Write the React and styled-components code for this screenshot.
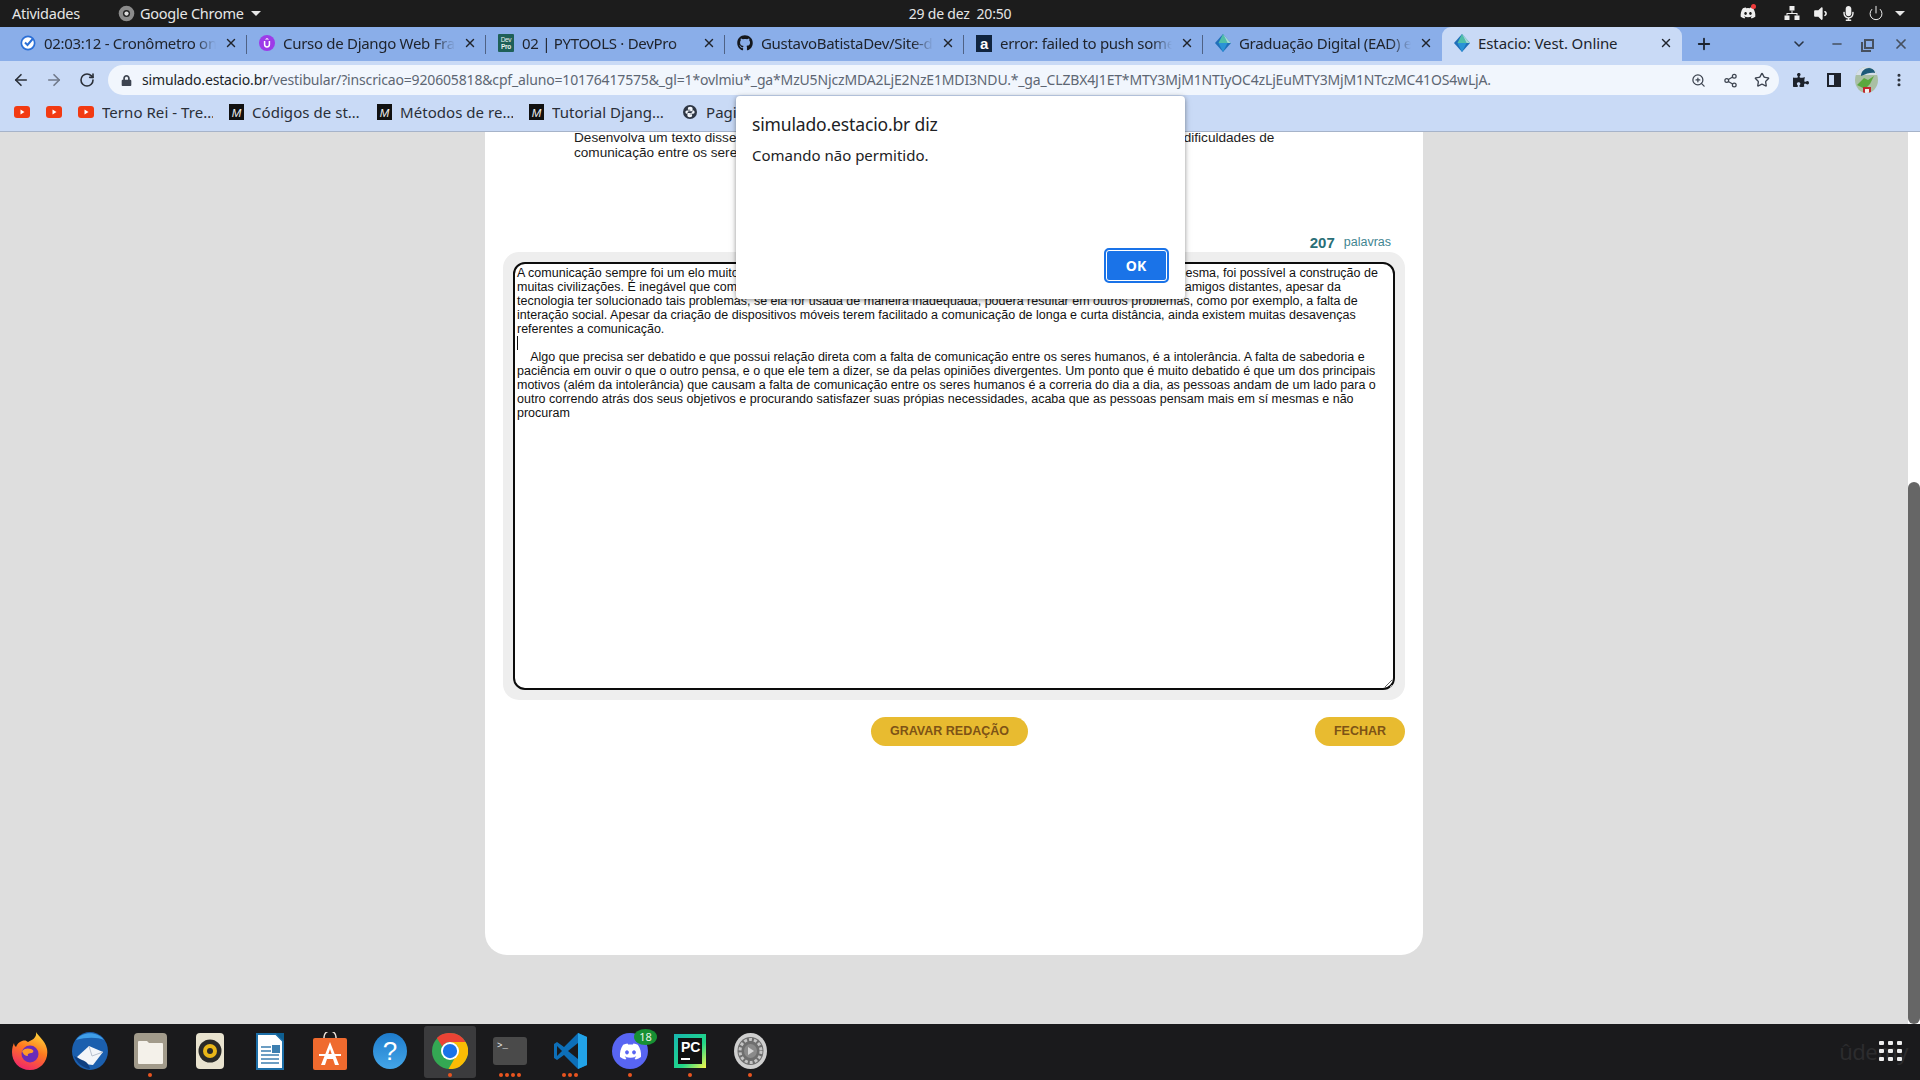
import React from 'react';
import styled, { createGlobalStyle } from 'styled-components';
import { FaDiscord, FaGithub, FaMicrophone, FaVolumeDown, FaPuzzlePiece, FaLock } from 'react-icons/fa';
import { ArrowLeft, ArrowRight, RotateCw, X, Plus, ChevronDown, Minus, ZoomIn, Share2, Star, EllipsisVertical, Power } from 'lucide-react';

const ui = '"Noto Sans", "Open Sans", sans-serif';
const arial = '"Liberation Sans", Arial, sans-serif';

const Global = createGlobalStyle`
  html, body { margin: 0; padding: 0; height: 100%; overflow: hidden; background: #dedede; }
  * { box-sizing: border-box; }
`;

const Screen = styled.div`
  position: relative;
  width: 1920px;
  height: 1080px;
  display: flex;
  flex-direction: column;
  overflow: hidden;
  font-family: ${ui};
`;

/* ubuntu top bar */
const TopBar = styled.div`
  height: 27px;
  flex: none;
  padding-bottom: 1px;
  background: #1c1c1c;
  color: #e6e6e6;
  display: grid;
  grid-template-columns: 1fr auto 1fr;
  align-items: center;
  font-size: 14.5px;
  letter-spacing: -0.25px;
`;
const TopLeft = styled.div`
  display: flex;
  align-items: center;
  padding-left: 12px;
`;
const AppName = styled.div`
  display: flex;
  align-items: center;
  gap: 5px;
  margin-left: 38px;
`;
const Clock = styled.div`
  white-space: pre;
  font-size: 14px;
  letter-spacing: -0.2px;
`;
const TopRight = styled.div`
  display: flex;
  align-items: center;
  justify-content: flex-end;
  padding-right: 10px;
`;
const StatusSlot = styled.div`
  position: relative;
  width: ${p => p.$w || 28}px;
  margin-right: ${p => p.$mr || 0}px;
  display: flex;
  justify-content: center;
  align-items: center;
  color: #eee;
`;
const RedDot = styled.span`
  position: absolute;
  top: -1px;
  right: 6px;
  width: 5px;
  height: 5px;
  border-radius: 50%;
  background: #ef3b3b;
`;
const DownCaret = styled.span`
  width: 0;
  height: 0;
  border-left: 5px solid transparent;
  border-right: 5px solid transparent;
  border-top: 5px solid #e6e6e6;
  margin-left: ${p => p.$ml || 0}px;
`;

/* chrome tabs */
const TabStrip = styled.div`
  height: 34px;
  flex: none;
  background: #8aaee9;
  display: flex;
  align-items: stretch;
  padding-left: 8px;
`;
const Tab = styled.div`
  position: relative;
  width: ${p => (p.$active ? 240 : 239)}px;
  display: flex;
  align-items: center;
  padding: 0 9px 2px 12px;
  gap: 8px;
  color: #20242c;
  font-size: 15px;
  letter-spacing: ${p => (p.$active ? '-0.1px' : '-0.3px')};
  background: ${p => (p.$active ? '#c9daf6' : 'transparent')};
  border-radius: 9px 9px 0 0;
  &::after {
    content: '';
    display: ${p => (p.$divider ? 'block' : 'none')};
    position: absolute;
    right: 0;
    top: 8px;
    bottom: 7px;
    width: 1px;
    background: #4f6285;
  }
`;
const TabTitle = styled.div`
  flex: 1;
  white-space: nowrap;
  overflow: hidden;
  -webkit-mask-image: ${p => (p.$active ? 'none' : 'linear-gradient(to right, #000 88%, transparent 100%)')};
  mask-image: ${p => (p.$active ? 'none' : 'linear-gradient(to right, #000 88%, transparent 100%)')};
`;
const NewTab = styled.div`
  width: 44px;
  display: flex;
  align-items: center;
  justify-content: center;
  color: #1c2430;
`;
const WindowButtons = styled.div`
  margin-left: auto;
  display: flex;
  align-items: center;
  padding-right: 3px;
  color: #46505f;
`;
const WindowSlot = styled.div`
  width: ${p => p.$w || 32}px;
  margin-right: ${p => p.$mr || 0}px;
  display: flex;
  justify-content: center;
  color: ${p => p.$dark ? '#2a3444' : 'inherit'};
`;
const Restore = styled.span`
  position: relative;
  width: 10px;
  height: 10px;
  border: 2px solid #46505f;
  &::before {
    content: '';
    position: absolute;
    left: -5px;
    top: 1px;
    width: 8px;
    height: 8px;
    border-left: 2px solid #46505f;
    border-bottom: 2px solid #46505f;
  }
`;

/* toolbar + bookmarks */
const ToolRow = styled.div`
  height: 35px;
  flex: none;
  background: #c9daf6;
  display: flex;
  align-items: flex-start;
  padding: 4px 0 0 5px;
  gap: 1px;
  color: #2a2f38;
`;
const ToolButton = styled.div`
  width: ${p => p.$w || 32}px;
  height: 30px;
  flex: none;
  display: flex;
  align-items: center;
  justify-content: center;
  color: ${p => p.$off ? '#70798a' : 'inherit'};
`;
const AddressBar = styled.div`
  width: 1671px;
  height: 30px;
  flex: none;
  margin: 0 5px 0 5px;
  padding: 0 1px 0 13px;
  border-radius: 15px;
  background: #f1f6fd;
  display: flex;
  align-items: center;
`;
const Url = styled.div`
  flex: 1;
  margin-left: 10px;
  padding-bottom: 2px;
  font-size: 14px;
  letter-spacing: -0.16px;
  white-space: nowrap;
  overflow: hidden;
  color: #5d6673;
`;
const Domain = styled.span`
  color: #1b1f27;
`;
const AddressIcon = styled.div`
  width: 32px;
  display: flex;
  justify-content: center;
  color: #3d4450;
`;
const PanelIcon = styled.span`
  width: 14px;
  height: 14px;
  border: 2px solid #1d222b;
  border-right-width: 7px;
`;
const Avatar = styled.span`
  width: 23px;
  height: 26px;
  border-radius: 50%;
  overflow: hidden;
  display: block;
`;
const BookmarkBar = styled.div`
  height: 36px;
  flex: none;
  background: #c9daf6;
  border-bottom: 1px solid #a6b3c9;
  display: flex;
  align-items: center;
  padding: 0 0 3px 14px;
  gap: 16px;
  font-size: 15px;
  letter-spacing: 0.05px;
  color: #2a2f38;
`;
const Bookmark = styled.div`
  display: flex;
  align-items: center;
  gap: 8px;
`;
const BookmarkText = styled.span`
  width: ${p => p.$w}px;
  white-space: nowrap;
  overflow: hidden;
`;

/* page */
const Viewport = styled.div`
  flex: 1;
  min-height: 0;
  display: flex;
  background: #dedede;
`;
const PageArea = styled.div`
  flex: 1;
  display: flex;
  justify-content: center;
  align-items: flex-start;
`;
const Card = styled.div`
  width: 938px;
  height: 823px;
  padding: 0 18px;
  background: #fff;
  border-radius: 0 0 22px 22px;
  overflow: hidden;
  font-family: ${arial};
`;
const Prompt = styled.p`
  margin: -2px 0 0 71px;
  width: 720px;
  font-size: 13.6px;
  line-height: 15px;
  color: #1c1c1c;
  white-space: pre;
`;
const WordCount = styled.div`
  height: 20px;
  margin-top: 72px;
  padding-right: 14px;
  display: flex;
  justify-content: flex-end;
  align-items: center;
  gap: 9px;
`;
const WordNumber = styled.strong`
  font-size: 15px;
  color: #2a6f77;
`;
const WordLabel = styled.span`
  font-size: 12.5px;
  color: #3f8591;
`;
const EssayPanel = styled.div`
  position: relative;
  padding: 10px;
  background: #eee;
  border-radius: 16px;
`;
const Essay = styled.textarea`
  display: block;
  width: 882px;
  height: 428px;
  padding: 2px;
  border: 2px solid #0c0c0c;
  border-radius: 12px;
  outline: none;
  resize: both;
  overflow: hidden;
  background: #fff;
  color: #111;
  font-family: ${arial};
  font-size: 12.5px;
  line-height: 14px;
  white-space: pre;
`;
const Caret = styled.span`
  position: absolute;
  left: 14px;
  top: 84px;
  width: 1px;
  height: 14px;
  background: #111;
`;
const ActionRow = styled.div`
  margin-top: 17px;
  padding-left: 368px;
  display: flex;
  justify-content: space-between;
`;
const ActionButton = styled.button`
  width: ${p => p.$w}px;
  height: 29px;
  border: 0;
  padding: 0 0 2px;
  border-radius: 15px;
  background: #e8bb30;
  color: #7d5316;
  font-family: ${arial};
  font-size: 12.5px;
  font-weight: 700;
`;
const ScrollTrack = styled.div`
  width: 12px;
  flex: none;
  background: #fff;
  padding-top: 350px;
`;
const ScrollThumb = styled.div`
  height: 542px;
  background: #666;
  border-radius: 6px;
`;

/* dock */
const Dock = styled.div`
  position: relative;
  height: 56px;
  flex: none;
  background: #1a1a1c;
  display: flex;
  align-items: flex-start;
  padding: 2px 0 0 4px;
  gap: 8px;
`;
const DockItem = styled.div`
  position: relative;
  width: 52px;
  height: 52px;
  display: flex;
  flex-direction: column;
  align-items: center;
  border-radius: 3px;
  background: ${p => (p.$active ? '#3b3b3d' : 'transparent')};
`;
const DockIcon = styled.div`
  height: 47px;
  display: flex;
  align-items: center;
  justify-content: center;
  padding-top: 3px;
`;
const Dots = styled.div`
  display: flex;
  gap: 2px;
`;
const Dot = styled.span`
  width: 4px;
  height: 4px;
  border-radius: 50%;
  background: #e9541f;
`;
const Badge = styled.span`
  position: absolute;
  top: 3px;
  left: 30px;
  width: 23px;
  height: 16px;
  border-radius: 50%;
  background: #179033;
  color: #e8f5e8;
  font-size: 11px;
  line-height: 16px;
  text-align: center;
`;
const Watermark = styled.span`
  position: absolute;
  right: 12px;
  top: 7px;
  font-family: ${ui};
  font-size: 22px;
  line-height: 40px;
  letter-spacing: -0.5px;
  color: #2c2c2e;
`;
const AppGrid = styled.div`
  position: absolute;
  left: 1879px;
  top: 17px;
  display: grid;
  grid-template-columns: repeat(3, 5px);
  gap: 4px 4px;
`;
const GridDot = styled.span`
  width: 5px;
  height: 4px;
  border-radius: 1px;
  background: #eee;
`;

/* alert */
const Alert = styled.div`
  position: absolute;
  left: 736px;
  top: 96px;
  width: 449px;
  height: 203px;
  padding: 16px 16px 16px;
  display: flex;
  flex-direction: column;
  background: #fff;
  border-radius: 4px;
  box-shadow: 0 1px 4px rgba(0, 0, 0, 0.35), 0 2px 8px rgba(0, 0, 0, 0.12);
  color: #202124;
`;
const AlertTitle = styled.div`
  font-size: 17.5px;
  line-height: 24px;
  letter-spacing: -0.15px;
`;
const AlertMessage = styled.div`
  margin-top: 9px;
  font-size: 15px;
  line-height: 20px;
`;
const AlertOk = styled.button`
  margin: auto 0 0 auto;
  width: 65px;
  height: 35px;
  padding: 0 1px 0 0;
  border: 2px solid #1a73e8;
  outline: 1px solid #fff;
  outline-offset: -3px;
  border-radius: 5px;
  background: #1a73e8;
  color: #fff;
  font-family: ${ui};
  font-size: 14px;
  font-weight: 700;
`;

const Chromium = ({ size = 16 }) => (
  <svg width={size} height={size} viewBox="0 0 48 48">
    <circle cx="24" cy="24" r="24" fill="#34a853" />
    <path d="M24 0a24 24 0 0 1 20.8 12H24a12 12 0 0 0-10.4 6L6.5 6.5A24 24 0 0 1 24 0z" fill="#ea4335" />
    <path d="M44.8 12A24 24 0 0 1 22 48l10.4-18A12 12 0 0 0 33 16l-9-4z" fill="#fbbc04" />
    <circle cx="24" cy="24" r="12" fill="#fff" />
    <circle cx="24" cy="24" r="9.5" fill="#1a73e8" />
  </svg>
);
const GrayChrome = () => (
  <svg width="17" height="17" viewBox="0 0 24 24">
    <circle cx="12" cy="12" r="11" fill="#8b8b8b" />
    <circle cx="12" cy="12" r="5" fill="#222" />
    <circle cx="12" cy="12" r="3" fill="#ddd" />
  </svg>
);
const ClockFav = () => (
  <svg width="16" height="16" viewBox="0 0 16 16">
    <circle cx="8" cy="8" r="7.5" fill="#2b6fd6" />
    <circle cx="8" cy="8" r="5.8" fill="#fff" />
    <path d="M5 7.5l2.5 2.5L13 3.5" stroke="#2b6fd6" strokeWidth="2" fill="none" />
  </svg>
);
const UdemyFav = () => (
  <svg width="16" height="16" viewBox="0 0 16 16">
    <circle cx="8" cy="8" r="8" fill="#9d3be8" />
    <path d="M5.6 6v3.6a2.4 2.4 0 0 0 4.8 0V6" stroke="#fff" strokeWidth="1.5" fill="none" />
    <path d="M8 3l2.2 1.4H5.8z" fill="#fff" />
  </svg>
);
const DevProFav = () => (
  <svg width="16" height="18" viewBox="0 0 16 18">
    <rect width="16" height="18" rx="1" fill="#1e6058" />
    <text x="8" y="7.5" fontSize="6.5" fill="#e8f0ee" textAnchor="middle" fontFamily="Liberation Sans">Dev</text>
    <text x="8" y="15" fontSize="6.5" fontWeight="700" fill="#e8f0ee" textAnchor="middle" fontFamily="Liberation Sans">Pro</text>
  </svg>
);
const AFav = () => (
  <svg width="16" height="17" viewBox="0 0 16 17">
    <rect width="16" height="17" fill="#10243e" />
    <text x="8" y="14" fontSize="15" fontWeight="700" fill="#fff" textAnchor="middle" fontFamily="Liberation Sans">a</text>
  </svg>
);
const Diamond = () => (
  <svg width="16" height="18" viewBox="0 0 16 18">
    <path d="M8 0L0 9l8 9 8-9z" fill="#1f6fb8" />
    <path d="M8 0L3.500 9h9z" fill="#4fc0a8" />
    <path d="M8 0l8 9h-3.500z" fill="#a3dccf" />
    <path d="M3.500 9L8 18l4.500-9z" fill="#2a93d6" />
  </svg>
);
const Youtube = () => (
  <svg width="16" height="12" viewBox="0 0 16 12">
    <rect width="16" height="12" rx="3" fill="#f23a12" />
    <path d="M6.5 3.5L10.5 6l-4 2.5z" fill="#fff" />
  </svg>
);
const MediumFav = () => (
  <svg width="15" height="16" viewBox="0 0 15 16">
    <rect width="15" height="16" fill="#111" />
    <text x="7.5" y="12.5" fontSize="11.5" fontStyle="italic" fill="#eee" textAnchor="middle" fontFamily="Liberation Sans">M</text>
  </svg>
);
const PythonFav = () => (
  <svg width="16" height="16" viewBox="0 0 16 16">
    <circle cx="8" cy="8" r="7" fill="#2e3644" />
    <path d="M8.200 2.800c-1.700 0-2.300.7-2.300 1.700v1.300h2.400v.6H4.900c-1 0-1.500.8-1.500 1.700 0 .9.500 1.600 1.300 1.600h.9V8.600c0-.8.700-1.400 1.500-1.400h2.300c.7 0 1.200-.6 1.200-1.300V4.500c0-1-.9-1.700-2.400-1.700z" fill="#f4f7fc" />
    <path d="M7.800 13.200c1.700 0 2.300-.7 2.300-1.700v-1.200H7.700v-.6h3.400c1 0 1.500-.8 1.500-1.700 0-.9-.5-1.600-1.300-1.600h-.9v1.100c0 .8-.7 1.400-1.500 1.400H6.600c-.7 0-1.200.6-1.200 1.300v1.300c0 1 .9 1.700 2.400 1.700z" fill="#f4f7fc" />
  </svg>
);
const NetworkIcon = () => (
  <svg width="16" height="16" viewBox="0 0 16 16" fill="#eee">
    <rect x="5.5" y="1" width="5" height="4.5" />
    <rect x="0.5" y="10.5" width="5" height="4.5" />
    <rect x="10.5" y="10.5" width="5" height="4.5" />
    <path d="M7.500 5.500h1V8h5v2.500h-1V9h-9v1.500h-1V8h5z" />
  </svg>
);
const AvatarArt = () => (
  <svg width="23" height="26" viewBox="0 0 23 26">
    <rect width="23" height="26" fill="#a9bfa4" />
    <path d="M0 0h23v8H0z" fill="#d6dfe8" />
    <path d="M6 9c0-5 4-8 8-8s6 3 6 5c-3-1-8 0-14 3z" fill="#1d5a78" />
    <path d="M2 18l7-7 4 2 6-4-4 8-5 5z" fill="#5aa83e" />
    <rect x="8" y="20" width="8" height="6" fill="#c2272d" />
    <rect x="10" y="22" width="4" height="4" fill="#eee" />
  </svg>
);

const FirefoxIcon = () => (
  <svg width="36" height="38" viewBox="0 0 36 38">
    <defs>
      <linearGradient id="ff" x1="0.7" y1="0" x2="0.3" y2="1">
        <stop offset="0" stopColor="#ffd43a" />
        <stop offset="0.45" stopColor="#ff7a1f" />
        <stop offset="1" stopColor="#f0236c" />
      </linearGradient>
    </defs>
    <path d="M24 0c2 4 9 8 11 17 2 11-6 21-17 21S0 30 0 20c0-4 1-7 2-9 0 2 1 3 2 4 1-3 3-5 6-6 4-1 4 0 6 1 4-2 9-4 8-10z" fill="url(#ff)" />
    <circle cx="18" cy="22" r="8.500" fill="#6a2bb8" />
    <path d="M10 19c3-3 6-3 9-2 3 1 3 3 1 4-3 0-5 1-4 3-3 0-5-2-6-5z" fill="#ff9a2a" />
  </svg>
);
const ThunderbirdIcon = () => (
  <svg width="36" height="38" viewBox="0 0 36 38">
    <ellipse cx="18" cy="19" rx="18" ry="19" fill="#1b5fae" />
    <path d="M4 8C10-1 26-1 32 8c-6-3-18-3-28 0z" fill="#3f9ee8" />
    <path d="M5 25l12-11 14 6-10 13c-6 0-12-3-16-8z" fill="#f3f5f9" />
    <path d="M17 14l3 10 11-4" stroke="#b8c0ce" fill="none" />
    <path d="M2 24c3 7 9 12 16 13-1-5-4-8-8-9z" fill="#0f3f80" />
  </svg>
);
const FilesIcon = () => (
  <svg width="33" height="36" viewBox="0 0 33 36">
    <rect width="33" height="36" rx="4" fill="#a29b8b" />
    <path d="M5 8h8l2 2h13a1 1 0 0 1 1 1v19a1 1 0 0 1-1 1H5a1 1 0 0 1-1-1V9a1 1 0 0 1 1-1z" fill="#f4f1ea" />
  </svg>
);
const RhythmboxIcon = () => (
  <svg width="28" height="36" viewBox="0 0 28 36">
    <rect width="28" height="36" rx="4" fill="#e9e3cf" />
    <circle cx="14" cy="18" r="11.500" fill="#2a2a28" />
    <circle cx="14" cy="18" r="7" fill="#eab718" />
    <circle cx="14" cy="18" r="3" fill="#2a2a28" />
  </svg>
);
const WriterIcon = () => (
  <svg width="28" height="37" viewBox="0 0 28 37">
    <path d="M1 1h19l7 7v28H1z" fill="#fff" stroke="#1d6fa8" strokeWidth="2" />
    <path d="M20 0l8 8V0z" fill="#0e5f91" />
    <path d="M5 14h10M5 18h10M5 22h18M5 26h18M5 30h18" stroke="#3d7fb0" strokeWidth="1.6" />
    <rect x="16" y="12" width="8" height="8" fill="#3d7fb0" />
  </svg>
);
const StoreIcon = () => (
  <svg width="34" height="38" viewBox="0 0 34 38">
    <path d="M11 7V5a6 6 0 0 1 12 0v2" stroke="#e9dfd6" strokeWidth="1.5" fill="none" />
    <rect y="6" width="34" height="32" rx="2" fill="#ef6a2e" />
    <path d="M17 10l-9 23h4l2-6h6l2 6h4zM15 23l2-6 2 6z" fill="#fff" />
    <rect x="6" y="22" width="22" height="2" fill="#fff" />
  </svg>
);
const HelpIcon = () => (
  <svg width="34" height="36" viewBox="0 0 34 36">
    <defs>
      <linearGradient id="hp" x1="0" y1="0" x2="0" y2="1">
        <stop offset="0" stopColor="#1e7ccc" />
        <stop offset="1" stopColor="#44a6e8" />
      </linearGradient>
    </defs>
    <ellipse cx="17" cy="18" rx="17" ry="18" fill="url(#hp)" />
    <text x="17" y="27" fontSize="26" fill="#fff" textAnchor="middle" fontFamily="Liberation Sans">?</text>
  </svg>
);
const TerminalIcon = () => (
  <svg width="34" height="28" viewBox="0 0 34 28">
    <rect width="34" height="28" rx="3" fill="#4a4a4a" />
    <text x="4" y="11" fontSize="9" fill="#eee" fontFamily="Liberation Mono">&gt;_</text>
  </svg>
);
const CodeIcon = () => (
  <svg width="33" height="36" viewBox="0 0 33 36">
    <path d="M24 0l9 4v28l-9 4-14-14L3 27l-3-2v-14l3-2 7 5z" fill="#0d6fb8" />
    <path d="M24 0l9 4v28l-9 4z" fill="#22a3e8" />
    <path d="M24 10L14 18l10 8z" fill="#1a1a1c" />
    <path d="M3 13l5 5-5 5z" fill="#1a1a1c" />
  </svg>
);
const DiscordCircle = styled.div`
  width: 36px;
  height: 36px;
  border-radius: 50%;
  background: #5865f2;
  display: flex;
  align-items: center;
  justify-content: center;
`;
const DiscordIcon = () => (
  <DiscordCircle>
    <FaDiscord size={23} color="#fff" />
  </DiscordCircle>
);
const PyCharmIcon = () => (
  <svg width="32" height="34" viewBox="0 0 32 34">
    <defs>
      <linearGradient id="pc" x1="0" y1="0" x2="1" y2="1">
        <stop offset="0" stopColor="#17b6b0" />
        <stop offset="0.6" stopColor="#21d789" />
        <stop offset="1" stopColor="#fcf84a" />
      </linearGradient>
    </defs>
    <rect width="32" height="34" fill="url(#pc)" />
    <rect x="4" y="4" width="24" height="26" fill="#111" />
    <text x="7" y="18" fontSize="14" fontWeight="700" fill="#fff" fontFamily="Liberation Sans">PC</text>
    <rect x="7" y="24" width="9" height="2" fill="#fff" />
  </svg>
);
const SettingsIcon = () => (
  <svg width="33" height="36" viewBox="0 0 33 36">
    <ellipse cx="16.5" cy="18" rx="16.5" ry="18" fill="#cfcfcf" />
    <ellipse cx="16.5" cy="18" rx="13" ry="14" fill="#6e6e6e" />
    <ellipse cx="16.5" cy="18" rx="10.500" ry="11.500" fill="none" stroke="#c4c4c4" strokeWidth="3" strokeDasharray="3 2" />
    <ellipse cx="16.5" cy="18" rx="6.500" ry="7" fill="#8a8a8a" />
    <path d="M14 14l6 4-6 4z" fill="#d4d4d4" />
  </svg>
);

const tabs = [
  { icon: <ClockFav />, title: '02:03:12 - Cronômetro online' },
  { icon: <UdemyFav />, title: 'Curso de Django Web Framework' },
  { icon: <DevProFav />, title: '02 | PYTOOLS · DevPro' },
  { icon: <FaGithub size={16} color="#14171c" />, title: 'GustavoBatistaDev/Site-de-vendas' },
  { icon: <AFav />, title: 'error: failed to push some refs' },
  { icon: <Diamond />, title: 'Graduação Digital (EAD) em tudo' },
];

const dockApps = [
  { icon: <FirefoxIcon />, dots: 0 },
  { icon: <ThunderbirdIcon />, dots: 0 },
  { icon: <FilesIcon />, dots: 1 },
  { icon: <RhythmboxIcon />, dots: 0 },
  { icon: <WriterIcon />, dots: 0 },
  { icon: <StoreIcon />, dots: 0 },
  { icon: <HelpIcon />, dots: 0 },
  { icon: <Chromium size={36} />, dots: 1, active: true },
  { icon: <TerminalIcon />, dots: 4 },
  { icon: <CodeIcon />, dots: 3 },
  { icon: <DiscordIcon />, dots: 1, badge: '18' },
  { icon: <PyCharmIcon />, dots: 1 },
  { icon: <SettingsIcon />, dots: 1 },
];

const essay = [
  'A comunicação sempre foi um elo muito importante para a evolução da humanidade em todo  planeta, pois através da mesma, foi possível a construção de',
  'muitas civilizações. É inegável que com o avanço da internet ficou muito mais fácil conversar com os nossos parentes e amigos distantes, apesar da',
  'tecnologia ter solucionado tais problemas, se ela for usada de maneira inadequada, poderá resultar em outros problemas, como por exemplo, a falta de',
  'interação social. Apesar da criação de dispositivos móveis terem facilitado a comunicação de longa e curta distância, ainda existem muitas desavenças',
  'referentes a comunicação.',
  '',
  '    Algo que precisa ser debatido e que possui relação direta com a falta de comunicação entre os seres humanos, é a intolerância. A falta de sabedoria e',
  'paciência em ouvir o que o outro pensa, e o que ele tem a dizer, se da pelas opiniões divergentes. Um ponto que é muito debatido é que um dos principais',
  'motivos (além da intolerância) que causam a falta de comunicação entre os seres humanos é a correria do dia a dia, as pessoas andam de um lado para o',
  'outro correndo atrás dos seus objetivos e procurando satisfazer suas própias necessidades, acaba que as pessoas pensam mais em sí mesmas e não',
  'procuram',
].join('\n');

export default function App() {
  return (
    <Screen>
      <Global />
      <TopBar>
        <TopLeft>
          Atividades
          <AppName>
            <GrayChrome />
            Google Chrome
            <DownCaret $ml={2} />
          </AppName>
        </TopLeft>
        <Clock>29 de dez  20:50</Clock>
        <TopRight>
          <StatusSlot $mr={16}>
            <FaDiscord size={16} />
            <RedDot />
          </StatusSlot>
          <StatusSlot><NetworkIcon /></StatusSlot>
          <StatusSlot><FaVolumeDown size={17} /></StatusSlot>
          <StatusSlot><FaMicrophone size={15} /></StatusSlot>
          <StatusSlot><Power size={16} strokeWidth={1.5} /></StatusSlot>
          <StatusSlot $w={20}><DownCaret /></StatusSlot>
        </TopRight>
      </TopBar>

      <TabStrip>
        {tabs.map((t, i) => (
          <Tab key={i} $divider={i < 5}>
            {t.icon}
            <TabTitle>{t.title}</TabTitle>
            <X size={14} strokeWidth={2.4} />
          </Tab>
        ))}
        <Tab $active>
          <Diamond />
          <TabTitle $active>Estacio: Vest. Online</TabTitle>
          <X size={14} strokeWidth={2.4} />
        </Tab>
        <NewTab><Plus size={18} strokeWidth={2.4} /></NewTab>
        <WindowButtons>
          <WindowSlot $dark $mr={6}><ChevronDown size={16} strokeWidth={2.4} /></WindowSlot>
          <WindowSlot><Minus size={14} strokeWidth={2.6} /></WindowSlot>
          <WindowSlot><Restore /></WindowSlot>
          <WindowSlot><X size={16} strokeWidth={2.6} /></WindowSlot>
        </WindowButtons>
      </TabStrip>

      <ToolRow>
        <ToolButton><ArrowLeft size={18} strokeWidth={2.2} /></ToolButton>
        <ToolButton $off><ArrowRight size={18} strokeWidth={2.2} /></ToolButton>
        <ToolButton $w={31}><RotateCw size={16} strokeWidth={2.4} /></ToolButton>
        <AddressBar>
          <FaLock size={11} color="#3d4450" />
          <Url>
            <Domain>simulado.estacio.br</Domain>
            /vestibular/?inscricao=920605818&amp;cpf_aluno=10176417575&amp;_gl=1*ovlmiu*_ga*MzU5NjczMDA2LjE2NzE1MDI3NDU.*_ga_CLZBX4J1ET*MTY3MjM1NTIyOC4zLjEuMTY3MjM1NTczMC41OS4wLjA.
          </Url>
          <AddressIcon><ZoomIn size={15} /></AddressIcon>
          <AddressIcon><Share2 size={15} /></AddressIcon>
          <AddressIcon><Star size={16} /></AddressIcon>
        </AddressBar>
        <ToolButton><FaPuzzlePiece size={16} color="#1d222b" /></ToolButton>
        <ToolButton><PanelIcon /></ToolButton>
        <ToolButton $w={31}><Avatar><AvatarArt /></Avatar></ToolButton>
        <ToolButton $w={31}><EllipsisVertical size={16} strokeWidth={2.6} /></ToolButton>
      </ToolRow>

      <BookmarkBar>
        <Bookmark><Youtube /></Bookmark>
        <Bookmark><Youtube /></Bookmark>
        <Bookmark><Youtube /><BookmarkText $w={111}>Terno Rei - Tre…</BookmarkText></Bookmark>
        <Bookmark><MediumFav /><BookmarkText $w={109}>Códigos de st…</BookmarkText></Bookmark>
        <Bookmark><MediumFav /><BookmarkText $w={113}>Métodos de re…</BookmarkText></Bookmark>
        <Bookmark><MediumFav /><BookmarkText $w={114}>Tutorial Djang…</BookmarkText></Bookmark>
        <Bookmark><PythonFav /><BookmarkText $w={60}>Pagina</BookmarkText></Bookmark>
      </BookmarkBar>

      <Viewport>
        <PageArea>
          <Card>
            <Prompt>{'Desenvolva um texto dissertativo-argumentativo em boa norma culta sobre o tema: como superar as dificuldades de\ncomunicação entre os seres humanos.'}</Prompt>
            <WordCount>
              <WordNumber>207</WordNumber>
              <WordLabel>palavras</WordLabel>
            </WordCount>
            <EssayPanel>
              <Essay readOnly value={essay} />
              <Caret />
            </EssayPanel>
            <ActionRow>
              <ActionButton $w={157}>GRAVAR REDAÇÃO</ActionButton>
              <ActionButton $w={90}>FECHAR</ActionButton>
            </ActionRow>
          </Card>
        </PageArea>
        <ScrollTrack><ScrollThumb /></ScrollTrack>
      </Viewport>

      <Dock>
        {dockApps.map((app, i) => (
          <DockItem key={i} $active={app.active}>
            <DockIcon>{app.icon}</DockIcon>
            <Dots>
              {Array.from({ length: app.dots }).map((_, d) => <Dot key={d} />)}
            </Dots>
            {app.badge && <Badge>{app.badge}</Badge>}
          </DockItem>
        ))}
        <Watermark>ûdemy</Watermark>
        <AppGrid>
          {Array.from({ length: 9 }).map((_, d) => <GridDot key={d} />)}
        </AppGrid>
      </Dock>

      <Alert>
        <AlertTitle>simulado.estacio.br diz</AlertTitle>
        <AlertMessage>Comando não permitido.</AlertMessage>
        <AlertOk>OK</AlertOk>
      </Alert>
    </Screen>
  );
}
